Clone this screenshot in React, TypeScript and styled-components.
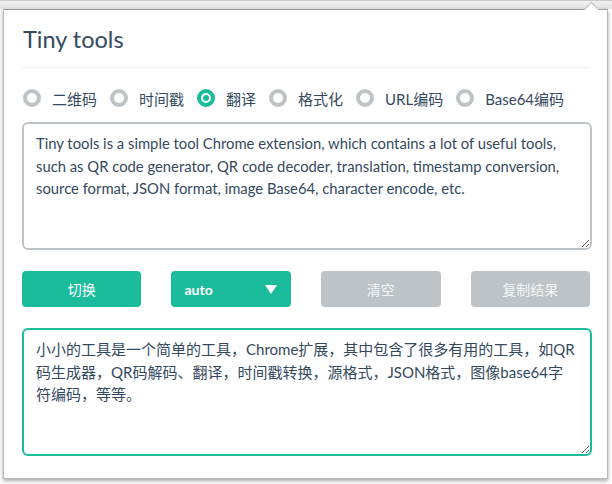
import { useState } from "react";
import styled, { createGlobalStyle } from "styled-components";

const GlobalStyle = createGlobalStyle`
  html, body {
    margin: 0;
    padding: 0;
    background: #ffffff;
  }
  body {
    font-family: Lato, "Noto Sans CJK SC", sans-serif;
    width: 612px;
    height: 484px;
    overflow: hidden;
  }
`;

const tools = ["二维码", "时间戳", "翻译", "格式化", "URL编码", "Base64编码"];

const source =
  "Tiny tools is a simple tool Chrome extension, which contains a lot of useful tools, such as QR code generator, QR code decoder, translation, timestamp conversion, source format, JSON format, image Base64, character encode, etc.";

const result =
  "小小的工具是一个简单的工具，Chrome扩展，其中包含了很多有用的工具，如QR码生成器，QR码解码、翻译，时间戳转换，源格式，JSON格式，图像base64字符编码，等等。";

const App = () => {
  const [current, setCurrent] = useState("翻译");

  return (
    <>
      <GlobalStyle />
      <BrowserBar />
      <Popup>
        <Header>
          <Title>Tiny tools</Title>
        </Header>
        <ToolList>
          {tools.map((name) => (
            <ToolOption key={name} onClick={() => setCurrent(name)}>
              <Radio checked={current === name} />
              <span>{name}</span>
            </ToolOption>
          ))}
        </ToolList>
        <TextBox readOnly defaultValue={source} />
        <ActionRow>
          <Button>切换</Button>
          <SelectButton>
            <span>auto</span>
            <Caret />
          </SelectButton>
          <Button disabled>清空</Button>
          <Button disabled>复制结果</Button>
        </ActionRow>
        <TextBox readOnly focused defaultValue={result} />
      </Popup>
    </>
  );
};

export default App;

const BrowserBar = styled.div`
  height: 9px;
  border-top: 1px solid #c9c9c9;
  background: linear-gradient(#f0f0f0, #e2e2e2);
  box-sizing: border-box;
`;

const Popup = styled.div`
  position: relative;
  width: 605px;
  height: 470px;
  margin-left: 3px;
  box-sizing: border-box;
  padding: 0 17px 0 18px;
  background: #fff;
  border: 1px solid #b8b8b8;
  border-top-color: #9a9a9a;
  box-shadow: 0 2px 4px rgba(0, 0, 0, 0.35);

  &::before {
    content: "";
    position: absolute;
    top: -6px;
    right: 10px;
    width: 10px;
    height: 10px;
    background: #fff;
    border-left: 1px solid #b8b8b8;
    border-top: 1px solid #b8b8b8;
    transform: rotate(45deg);
  }
`;

const Header = styled.div`
  padding: 16px 0 14px 1px;
  border-bottom: 1px solid #ecf0f1;
`;

const Title = styled.h1`
  margin: 0;
  font-family: Lato, sans-serif;
  font-size: 23.5px;
  line-height: 27px;
  font-weight: 400;
  color: #34495e;
`;

const ToolList = styled.div`
  display: flex;
  align-items: center;
  margin-top: 18px;
  height: 24px;
  padding-left: 1px;
`;

const ToolOption = styled.label`
  display: flex;
  align-items: center;
  gap: 11px;
  margin-right: 13px;
  font-size: 15px;
  color: #34495e;
  cursor: pointer;
`;

const Radio = styled.span<{ checked?: boolean }>`
  position: relative;
  flex: none;
  width: 18px;
  height: 18px;
  box-sizing: border-box;
  border-radius: 50%;
  border: 4px solid ${(p) => (p.checked ? "#1abc9c" : "#bdc3c7")};

  &::after {
    content: "";
    display: ${(p) => (p.checked ? "block" : "none")};
    position: absolute;
    top: 2px;
    left: 2px;
    width: 6px;
    height: 6px;
    border-radius: 50%;
    background: #1abc9c;
  }
`;

const TextBox = styled.textarea<{ focused?: boolean }>`
  display: block;
  width: 570px;
  height: 128px;
  margin-top: 12px;
  box-sizing: border-box;
  padding: 8px 13px 8px 12px;
  border: 2px solid ${(p) => (p.focused ? "#1abc9c" : "#bdc3c7")};
  border-radius: 6px;
  font-family: Lato, "Noto Sans CJK SC", sans-serif;
  font-size: ${(p) => (p.focused ? "15px" : "14.8px")};
  line-height: 22.5px;
  color: #34495e;
  outline: none;
  resize: vertical;

  & + div {
    margin-top: 21px;
  }
`;

const ActionRow = styled.div`
  display: flex;
  gap: 30px;
  margin-bottom: 21px;
`;

const Button = styled.button`
  width: 120px;
  height: 36px;
  border: none;
  border-radius: 4px;
  background: #1abc9c;
  color: #fff;
  font-family: Lato, "Noto Sans CJK SC", sans-serif;
  font-size: 14px;
  cursor: pointer;

  &:disabled {
    background: #bdc3c7;
    color: #f4f6f6;
    cursor: default;
  }
`;

const SelectButton = styled(Button)`
  display: flex;
  align-items: center;
  justify-content: space-between;
  padding: 0 14px 0 13px;
  font-family: Lato, sans-serif;
  font-weight: 700;
`;

const Caret = styled.span`
  width: 0;
  height: 0;
  border-left: 6px solid transparent;
  border-right: 6px solid transparent;
  border-top: 9px solid #fff;
`;
